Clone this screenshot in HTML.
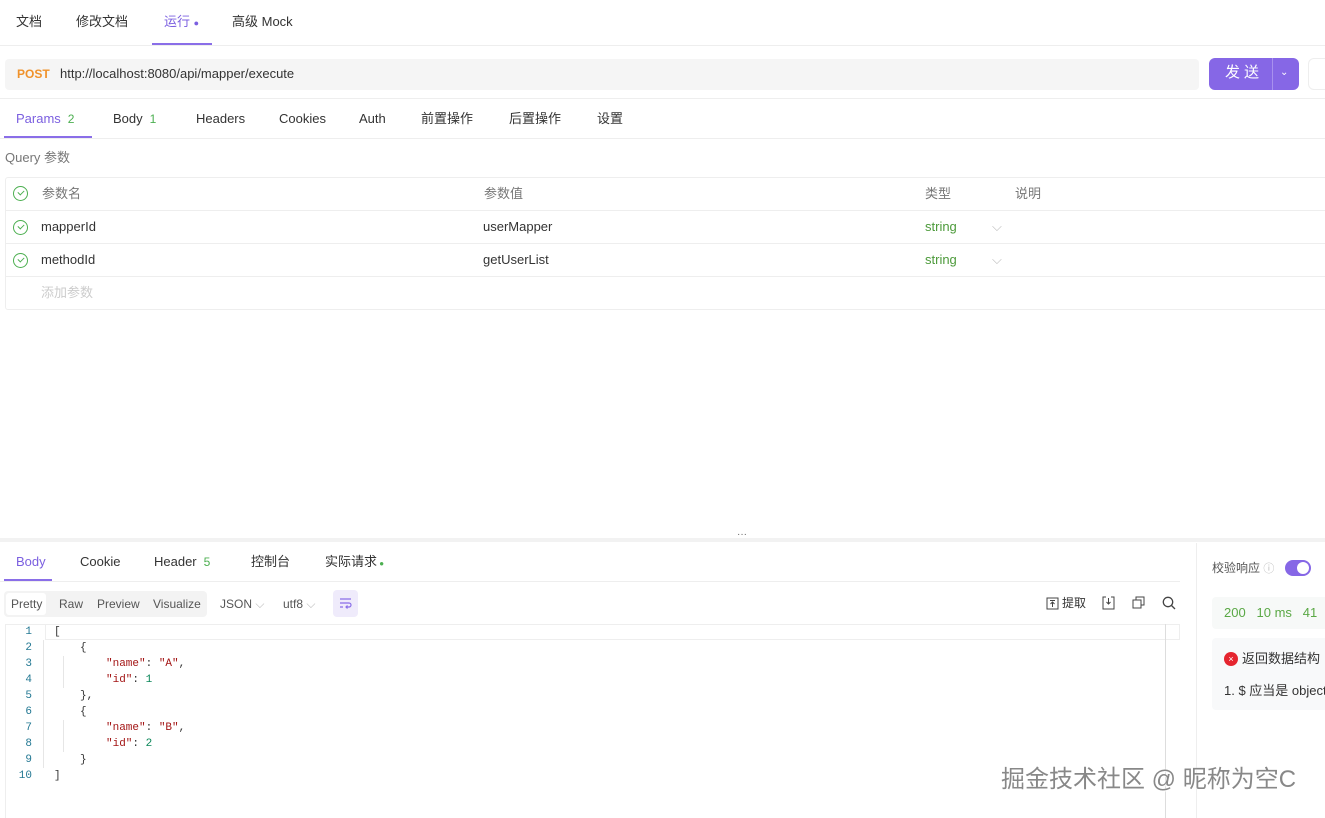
<!DOCTYPE html>
<html><head><meta charset="utf-8"><style>
*{margin:0;padding:0;box-sizing:border-box}
body{width:1325px;height:818px;overflow:hidden;background:#fff;font-family:"Liberation Sans","Noto Sans CJK SC",sans-serif;font-size:13px;color:#333;position:relative;line-height:18px}
.a{position:absolute;white-space:nowrap;line-height:18px}
.g{color:#777}
.chk{position:absolute;width:15px;height:15px;border:1.3px solid #4caf50;border-radius:50%}
.chk:after{content:"";position:absolute;left:3.5px;top:2.5px;width:5px;height:3px;border-left:1.3px solid #4caf50;border-bottom:1.3px solid #4caf50;transform:rotate(-45deg)}
.mono{font-family:"Liberation Mono","DejaVu Sans Mono",monospace;font-size:11px}
.mono .a,.ln{line-height:16px}
.ln{position:absolute;left:10px;width:22px;text-align:right;color:#237893}
.s{color:#a31515}.n{color:#098658}
</style></head><body>
<!-- top tabs -->
<div class="a" style="left:16px;top:13px">文档</div>
<div class="a" style="left:76px;top:13px">修改文档</div>
<div class="a" style="left:164px;top:13px;color:#7b5fe0">运行 <span style="font-size:9px">●</span></div>
<div class="a" style="left:232px;top:13px">高级 Mock</div>
<div class="a" style="left:0;top:45px;width:1325px;height:1px;background:#eee"></div>
<div class="a" style="left:152px;top:43px;width:60px;height:2px;background:#8a6ee8"></div>
<!-- url -->
<div class="a" style="left:5px;top:59px;width:1194px;height:31px;background:#f5f5f5;border-radius:4px"></div>
<div class="a" style="left:17px;top:65px;color:#f0922b;font-weight:bold;font-size:12px">POST</div>
<div class="a" style="left:60px;top:65px">http://localhost:8080/api/mapper/execute</div>
<div class="a" style="left:1209px;top:58px;width:90px;height:32px;background:#8667e6;border-radius:6px"></div>
<div class="a" style="left:1272px;top:58px;width:1px;height:32px;background:#a891ee"></div>
<div class="a" style="left:1225px;top:64px;color:#fff;font-size:15px;letter-spacing:4px">发送</div>
<div class="a" style="left:1280px;top:64px;color:#fff;font-size:10px">⌄</div>
<div class="a" style="left:1308px;top:58px;width:30px;height:32px;border:1px solid #eee;border-radius:6px"></div>
<div class="a" style="left:0;top:98px;width:1325px;height:1px;background:#eee"></div>
<!-- param tabs -->
<div class="a" style="left:16px;top:110px;color:#7b5fe0">Params <span style="color:#4caf50;font-size:12px">&nbsp;2</span></div>
<div class="a" style="left:113px;top:110px">Body <span style="color:#4caf50;font-size:12px">&nbsp;1</span></div>
<div class="a" style="left:196px;top:110px">Headers</div>
<div class="a" style="left:279px;top:110px">Cookies</div>
<div class="a" style="left:359px;top:110px">Auth</div>
<div class="a" style="left:421px;top:110px">前置操作</div>
<div class="a" style="left:509px;top:110px">后置操作</div>
<div class="a" style="left:597px;top:110px">设置</div>
<div class="a" style="left:0;top:138px;width:1325px;height:1px;background:#eee"></div>
<div class="a" style="left:4px;top:136px;width:88px;height:2px;background:#8a6ee8"></div>
<div class="a g" style="left:5px;top:149px">Query 参数</div>
<!-- table -->
<div class="a" style="left:5px;top:177px;width:1330px;height:133px;border:1px solid #eee;border-radius:3px"></div>
<div class="a" style="left:5px;top:210px;width:1320px;height:1px;background:#eee"></div>
<div class="a" style="left:5px;top:243px;width:1320px;height:1px;background:#eee"></div>
<div class="a" style="left:5px;top:276px;width:1320px;height:1px;background:#eee"></div>
<div class="chk" style="left:13px;top:186px"></div>
<div class="chk" style="left:13px;top:220px"></div>
<div class="chk" style="left:13px;top:253px"></div>
<div class="a g" style="left:42px;top:185px">参数名</div>
<div class="a g" style="left:484px;top:185px">参数值</div>
<div class="a g" style="left:925px;top:185px">类型</div>
<div class="a g" style="left:1015px;top:185px">说明</div>
<div class="a" style="left:41px;top:218px">mapperId</div>
<div class="a" style="left:483px;top:218px">userMapper</div>
<div class="a" style="left:925px;top:218px;color:#4c9a3a">string</div>
<div class="a" style="left:992px;top:218px;color:#bbb">⌵</div>
<div class="a" style="left:41px;top:251px">methodId</div>
<div class="a" style="left:483px;top:251px">getUserList</div>
<div class="a" style="left:925px;top:251px;color:#4c9a3a">string</div>
<div class="a" style="left:992px;top:251px;color:#bbb">⌵</div>
<div class="a" style="left:41px;top:284px;color:#ccc">添加参数</div>
<!-- splitter -->
<div class="a" style="left:0;top:538px;width:1325px;height:4px;background:#f2f2f2"></div>
<div class="a" style="left:737px;top:530px;color:#666;font-size:10px;line-height:10px">···</div>
<!-- bottom tabs -->
<div class="a" style="left:16px;top:553px;color:#7b5fe0">Body</div>
<div class="a" style="left:80px;top:553px">Cookie</div>
<div class="a" style="left:154px;top:553px">Header <span style="color:#4caf50;font-size:12px">&nbsp;5</span></div>
<div class="a" style="left:251px;top:553px">控制台</div>
<div class="a" style="left:325px;top:553px">实际请求<span style="color:#4caf50;font-size:8px"> ●</span></div>
<div class="a" style="left:0;top:581px;width:1180px;height:1px;background:#eee"></div>
<div class="a" style="left:4px;top:579px;width:48px;height:2px;background:#8a6ee8"></div>
<div class="a" style="left:1196px;top:543px;width:1px;height:275px;background:#eee"></div>
<!-- toolbar -->
<div class="a" style="left:4px;top:591px;width:203px;height:26px;background:#f3f3f3;border-radius:4px"></div>
<div class="a" style="left:6px;top:593px;width:40px;height:22px;background:#fff;border-radius:3px"></div>
<div class="a" style="left:11px;top:595px;font-size:12px;color:#555">Pretty</div>
<div class="a" style="left:59px;top:595px;font-size:12px;color:#555">Raw</div>
<div class="a" style="left:97px;top:595px;font-size:12px;color:#555">Preview</div>
<div class="a" style="left:153px;top:595px;font-size:12px;color:#555">Visualize</div>
<div class="a" style="left:220px;top:595px;font-size:12px;color:#555">JSON <span style="color:#bbb">⌵</span></div>
<div class="a" style="left:283px;top:595px;font-size:12px;color:#555">utf8 <span style="color:#bbb">⌵</span></div>
<div class="a" style="left:333px;top:590px;width:25px;height:27px;background:#efebfb;border-radius:4px"></div>
<svg class="a" style="left:339px;top:597px" width="13" height="12" viewBox="0 0 13 12" fill="none" stroke="#8a6ee8" stroke-width="1.2"><path d="M1 2h11M1 6h9a2 2 0 010 4H7M8.5 8.5L7 10l1.5 1.5M1 10h3"/></svg>
<svg class="a" style="left:1046px;top:597px" width="13" height="13" viewBox="0 0 13 13" fill="none" stroke="#444"><rect x="1" y="1" width="11" height="11"/><path d="M4 3.5h5M6.5 10V5M4.5 7l2-2 2 2"/></svg>
<div class="a" style="left:1062px;top:594px;font-size:12px">提取</div>
<svg class="a" style="left:1102px;top:596px" width="13" height="14" viewBox="0 0 13 14" fill="none" stroke="#444"><path d="M4 1H1v12h11V1H9M6.5 2v6M4.5 6l2 2 2-2"/></svg>
<svg class="a" style="left:1132px;top:596px" width="13" height="13" viewBox="0 0 13 13" fill="none" stroke="#444"><rect x="1" y="4" width="8" height="8"/><path d="M4 4V1h8v8H9"/></svg>
<svg class="a" style="left:1162px;top:596px" width="14" height="14" viewBox="0 0 14 14" fill="none" stroke="#444" stroke-width="1.3"><circle cx="6" cy="6" r="4.7"/><path d="M9.5 9.5L13 13"/></svg>
<!-- editor -->
<div class="a" style="left:5px;top:624px;width:1175px;height:194px;border-left:1px solid #eee;border-top:1px solid #eee"></div>
<div class="a" style="left:45px;top:624px;width:1135px;height:16px;border:1px solid #eee"></div>
<div class="a" style="left:1165px;top:624px;width:1px;height:194px;background:#ddd"></div>
<div class="a" style="left:43px;top:640px;width:1px;height:128px;background:#e6e6e6"></div>
<div class="a" style="left:63px;top:656px;width:1px;height:32px;background:#e6e6e6"></div>
<div class="a" style="left:63px;top:720px;width:1px;height:32px;background:#e6e6e6"></div>
<div class="mono">
<div class="ln" style="top:624px">1</div><div class="ln" style="top:640px">2</div><div class="ln" style="top:656px">3</div><div class="ln" style="top:672px">4</div><div class="ln" style="top:688px">5</div><div class="ln" style="top:704px">6</div><div class="ln" style="top:720px">7</div><div class="ln" style="top:736px">8</div><div class="ln" style="top:752px">9</div><div class="ln" style="top:768px">10</div>
<div class="a" style="left:54px;top:624px">[</div>
<div class="a" style="left:80px;top:640px">{</div>
<div class="a" style="left:106px;top:656px"><span class="s">"name"</span>: <span class="s">"A"</span>,</div>
<div class="a" style="left:106px;top:672px"><span class="s">"id"</span>: <span class="n">1</span></div>
<div class="a" style="left:80px;top:688px">},</div>
<div class="a" style="left:80px;top:704px">{</div>
<div class="a" style="left:106px;top:720px"><span class="s">"name"</span>: <span class="s">"B"</span>,</div>
<div class="a" style="left:106px;top:736px"><span class="s">"id"</span>: <span class="n">2</span></div>
<div class="a" style="left:80px;top:752px">}</div>
<div class="a" style="left:54px;top:768px">]</div>
</div>
<!-- right panel -->
<div class="a" style="left:1212px;top:559px;font-size:12px;color:#555">校验响应 <span style="color:#bbb;font-size:11px">ⓘ</span></div>
<div class="a" style="left:1285px;top:560px;width:26px;height:16px;background:#8667e6;border-radius:8px"></div>
<div class="a" style="left:1297px;top:562px;width:12px;height:12px;background:#fff;border-radius:50%"></div>
<div class="a" style="left:1212px;top:597px;width:120px;height:32px;background:#f7f9f8;border-radius:4px"></div>
<div class="a" style="left:1224px;top:604px;color:#5aa845">200 &nbsp;&nbsp;10 ms &nbsp;&nbsp;41</div>
<div class="a" style="left:1212px;top:638px;width:120px;height:72px;background:#f8f9fa;border-radius:4px"></div>
<div class="a" style="left:1224px;top:652px;width:14px;height:14px;background:#e5252f;border-radius:50%;color:#fff;font-size:9px;text-align:center;line-height:14px">×</div>
<div class="a" style="left:1242px;top:650px">返回数据结构</div>
<div class="a" style="left:1224px;top:682px">1. $ 应当是 object</div>
<!-- watermark -->
<div class="a" style="left:1001px;top:765px;font-size:24px;line-height:30px;color:#888;text-shadow:0 0 2px #fff,1px 1px 1px #fff">掘金技术社区 @ 昵称为空C</div>
</body></html>
